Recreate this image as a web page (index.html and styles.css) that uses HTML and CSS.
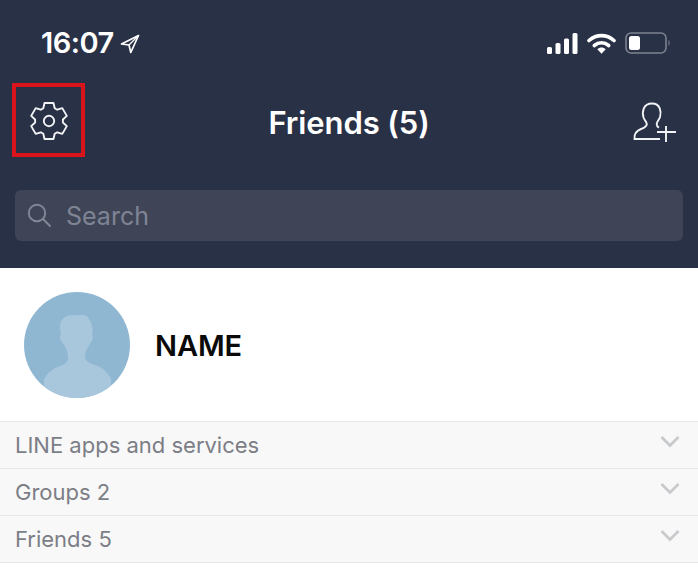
FILE: index.html
```html
<!DOCTYPE html>
<html lang="en">
<head>
<meta charset="utf-8">
<title>Friends</title>
<link rel="stylesheet" href="styles.css">
</head>
<body>
<header class="top">
  <div class="status">
    <div class="status-left">
      <span class="time">16:07</span>
      <svg class="loc" width="20" height="20" viewBox="0 0 20 20"><path d="M18.500 1.500 1.500 10l7.500 1 1.800 7.500z" fill="none" stroke="#fff" stroke-width="1.700" stroke-linejoin="round"/><path d="M18.500 1.500 9 11" stroke="#fff" stroke-width="1.300"/></svg>
    </div>
    <div class="status-right">
      <svg width="33" height="21" viewBox="0 0 33 21"><rect x="1" y="14" width="5" height="7" rx="1.500" fill="#fff"/><rect x="9.500" y="10" width="5" height="11" rx="1.500" fill="#fff"/><rect x="18" y="5.500" width="5" height="15.500" rx="1.500" fill="#fff"/><rect x="26.500" y="0" width="5" height="21" rx="1.500" fill="#fff"/></svg>
      <svg class="wifi" width="29" height="21" viewBox="0 0 29 21"><path d="M2 7.500C9.500 1 19.500 1 27 7.500" fill="none" stroke="#fff" stroke-width="3.600" stroke-linecap="round"/><path d="M7.300 12.500c4.300-3.500 10.100-3.500 14.400 0" fill="none" stroke="#fff" stroke-width="3.600" stroke-linecap="round"/><path d="M10.300 16.200c2.700-2.200 5.700-2.200 8.400 0l-4.200 4.500z" fill="#fff"/></svg>
      <svg class="battery" width="46" height="22" viewBox="0 0 46 22"><rect x="1" y="1" width="40" height="20" rx="5" fill="none" stroke="#7d8290" stroke-width="1.600"/><rect x="4" y="4" width="11" height="14" rx="2.500" fill="#fff"/><path d="M43.500 8c1.500 1 1.500 5 0 6z" fill="#7d8290"/></svg>
    </div>
  </div>
  <div class="nav">
    <div class="settings">
      <svg class="gear" width="40" height="40" viewBox="0 0 40 40"><path d="M15.500 2.050H24.500L25.700 7.200 28.200 8.700 33.300 7.100 37.800 14.900 33.900 18.500V21.500L37.800 25.100 33.300 32.900 28.200 31.300 25.700 32.800 24.500 37.950H15.500L14.300 32.800 11.800 31.300 6.700 32.900 2.200 25.100 6.100 21.500V18.500L2.200 14.900 6.700 7.100 11.800 8.700 14.300 7.200Z" fill="none" stroke="#f2f3f5" stroke-width="1.900" stroke-linejoin="round"/><circle cx="20" cy="20" r="5.200" fill="none" stroke="#f2f3f5" stroke-width="1.900"/></svg>
    </div>
    <h1 class="title">Friends (5)</h1>
    <svg class="add" width="46" height="44" viewBox="0 0 46 44"><path d="M28 38H2.500c-.6-5 1.500-8 6.500-10 3.500-1.300 5.800-2.500 5.800-5 0-1.800-2.300-3.700-3.300-6.500C10 11 11 2.500 20 2.500c8.500 0 9.500 8.500 8 13.500-1 3-3.300 5-3.300 7 0 1.800.8 2.900 2.300 3.700" fill="none" stroke="#f2f3f5" stroke-width="1.900"/><path d="M34 25v16M25 31h19" stroke="#f2f3f5" stroke-width="1.900" fill="none"/></svg>
  </div>
  <div class="search">
    <svg width="25" height="25" viewBox="0 0 25 25"><circle cx="10" cy="10" r="8.200" fill="none" stroke="#838796" stroke-width="1.900"/><path d="m16 16 7.500 7.500" stroke="#838796" stroke-width="1.900"/></svg>
    <span class="search-text">Search</span>
  </div>
</header>
<main>
  <section class="profile">
    <svg class="avatar" width="106" height="106" viewBox="0 0 106 106"><clipPath id="c"><circle cx="53" cy="53" r="53"/></clipPath><circle cx="53" cy="53" r="53" fill="#8fb7d2"/><path clip-path="url(#c)" d="M44 66C44 60 42 55 38 50 36 47 35 45 37 42 35 35 36 28 40 26 44 22 52 24 56 23 60 22 64 24 65 27 69 33 69 38 68 43 70 46 68 48 66 52 63 56 61 60 61 66 62 70 68 72 74 74 80 77 84 81 87 87V110H20V87C24 80 30 76 36 74 41 72 44 70 44 66Z" fill="#a9c7dc"/></svg>
    <span class="name">NAME</span>
  </section>
  <ul class="groups">
    <li class="row"><span>LINE apps and services</span><svg class="chev" width="20" height="13" viewBox="0 0 20 13"><path d="m1.500 2 8.500 8.500L18.500 2" fill="none" stroke="#c9cacc" stroke-width="2.800"/></svg></li>
    <li class="row"><span>Groups 2</span><svg class="chev" width="20" height="13" viewBox="0 0 20 13"><path d="m1.500 2 8.500 8.500L18.500 2" fill="none" stroke="#c9cacc" stroke-width="2.800"/></svg></li>
    <li class="row"><span>Friends 5</span><svg class="chev" width="20" height="13" viewBox="0 0 20 13"><path d="m1.500 2 8.500 8.500L18.500 2" fill="none" stroke="#c9cacc" stroke-width="2.800"/></svg></li>
  </ul>
</main>
</body>
</html>
```
FILE: styles.css
```css
* { box-sizing: border-box; }
html, body { margin: 0; padding: 0; }
body { width: 698px; height: 583px; overflow: hidden; background: #fff; font-family: Inter, "Liberation Sans", sans-serif; }
.top { height: 268px; background: #293147; display: flex; flex-direction: column; }
.status { height: 83px; display: flex; justify-content: space-between; align-items: flex-start; padding: 27px 27px 0 41px; }
.status-left { display: flex; align-items: center; gap: 6px; height: 32px; }
.time { color: #fff; font-size: 29px; font-weight: 600; line-height: 32px; letter-spacing: -.5px; }
.loc { margin-top: 2px; }
.status-right { display: flex; align-items: center; gap: 8px; height: 32px; }
.battery { margin-left: 1px; }
.nav { height: 74px; display: flex; align-items: center; justify-content: space-between; padding: 0 20px 0 12px; position: relative; }
.settings { width: 73px; height: 74px; border: 4px solid #d9141c; display: flex; align-items: center; justify-content: center; }
.gear { margin-top: 2px; }
.title { margin: 6px 0 0; color: #fff; font-size: 31px; font-weight: 600; line-height: 36px; position: absolute; left: 0; right: 0; text-align: center; pointer-events: none; letter-spacing: -.1px; }
.add { margin-top: 6px; }
.search { margin: 33px 15px 0; height: 51px; background: #3f4557; border-radius: 6px; display: flex; align-items: center; padding: 0 12px; gap: 14px; }
.search-text { color: #7f8495; font-size: 25px; line-height: 32px; padding-top: 1px; }
.profile { height: 154px; display: flex; align-items: center; padding: 1px 0 0 24px; gap: 25px; border-bottom: 1px solid #e8e8e9; }
.avatar { flex: none; }
.name { font-size: 29px; font-weight: 600; color: #0a0a0a; line-height: 36px; padding-top: 2px; letter-spacing: -.1px; }
.groups { list-style: none; margin: 0; padding: 0; }
.row { height: 47px; background: #f8f8f9; border-bottom: 1px solid #e6e6e7; display: flex; align-items: center; justify-content: space-between; padding: 0 18px 0 15px; color: #7c7e86; font-size: 22px; }
.chev { margin-top: -8px; }
```
